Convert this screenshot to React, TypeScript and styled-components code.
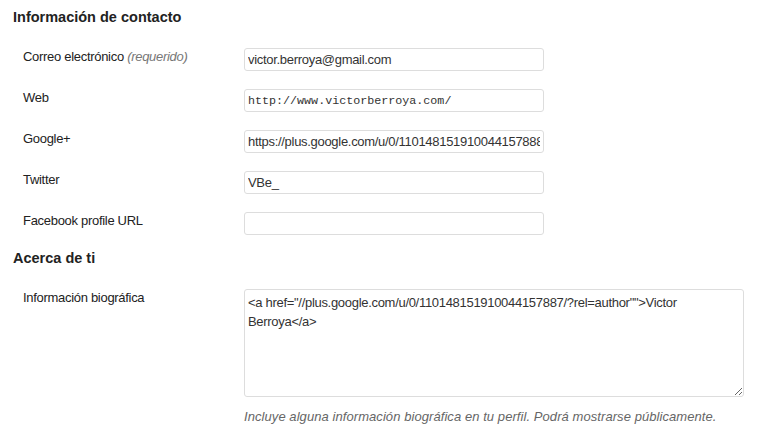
import * as React from 'react';
import styled, { createGlobalStyle } from 'styled-components';

const GlobalStyle = createGlobalStyle`
    html, body {
        margin: 0;
        padding: 0;
        background: #ffffff;
    }
    body {
        font-family: Arial, "Liberation Sans", sans-serif;
        font-size: 13px;
        color: #222222;
    }
`;

type HeadingProps = {
    $top: number;
};

const Page = styled.div`
    padding: 0 13px;
    width: 771px;
    box-sizing: border-box;
`;

const Heading = styled.h3<HeadingProps>`
    margin: 0;
    padding: ${props => props.$top}px 0 12px;
    font-size: 14.5px;
    line-height: 20px;
    font-weight: bold;
    color: #222222;
`;

const FormTable = styled.div`
    display: grid;
    grid-template-columns: 231px 1fr;
`;

const Label = styled.label`
    padding: 10px 0 0 10px;
    line-height: 16px;
    letter-spacing: -0.3px;
    color: #222222;
`;

const Hint = styled.span`
    font-style: italic;
    color: #777777;
`;

const Field = styled.div`
    padding: 9px 0;
`;

type InputProps = {
    $mono?: boolean;
};

const TextInput = styled.input<InputProps>`
    display: block;
    box-sizing: border-box;
    width: 300px;
    height: 23px;
    margin: 0;
    padding: 0 3px;
    border: 1px solid #dddddd;
    border-radius: 3px;
    background: #ffffff;
    color: #333333;
    font-family: ${props =>
        props.$mono ? '"Liberation Mono", "DejaVu Sans Mono", monospace' : 'Arial, "Liberation Sans", sans-serif'};
    font-size: ${props => (props.$mono ? '11.7px' : '13px')};
    letter-spacing: ${props => (props.$mono ? '0' : '-0.3px')};
    outline: none;
`;

const Bio = styled.textarea`
    display: block;
    box-sizing: border-box;
    width: 500px;
    height: 108px;
    margin: 0;
    padding: 3px 3px;
    border: 1px solid #dddddd;
    border-radius: 3px;
    background: #ffffff;
    color: #333333;
    font-family: Arial, "Liberation Sans", sans-serif;
    font-size: 13px;
    line-height: 19px;
    letter-spacing: -0.3px;
    outline: none;
`;

const Description = styled.p`
    margin: 12px 0 0;
    font-style: italic;
    color: #666666;
    line-height: 16px;
    letter-spacing: 0.07px;
`;

const contactFields = [
    { label: 'Correo electrónico', hint: '(requerido)', value: 'victor.berroya@gmail.com' },
    { label: 'Web', value: 'http://www.victorberroya.com/', mono: true },
    { label: 'Google+', value: 'https://plus.google.com/u/0/110148151910044157888' },
    { label: 'Twitter', value: 'VBe_' },
    { label: 'Facebook profile URL', value: '' },
];

const bio =
    '<a href="//plus.google.com/u/0/110148151910044157887/?rel=author"">Victor Berroya</a>';

export default function App() {
    return (
        <Page>
            <GlobalStyle />
            <Heading $top={7}>Información de contacto</Heading>
            <FormTable>
                {contactFields.map(field => (
                    <React.Fragment key={field.label}>
                        <Label>
                            {field.label} {field.hint && <Hint>{field.hint}</Hint>}
                        </Label>
                        <Field>
                            <TextInput $mono={field.mono} defaultValue={field.value} />
                        </Field>
                    </React.Fragment>
                ))}
            </FormTable>
            <Heading $top={4}>Acerca de ti</Heading>
            <FormTable>
                <Label>Información biográfica</Label>
                <Field>
                    <Bio defaultValue={bio} />
                    <Description>
                        Incluye alguna información biográfica en tu perfil. Podrá mostrarse públicamente.
                    </Description>
                </Field>
            </FormTable>
        </Page>
    );
}
